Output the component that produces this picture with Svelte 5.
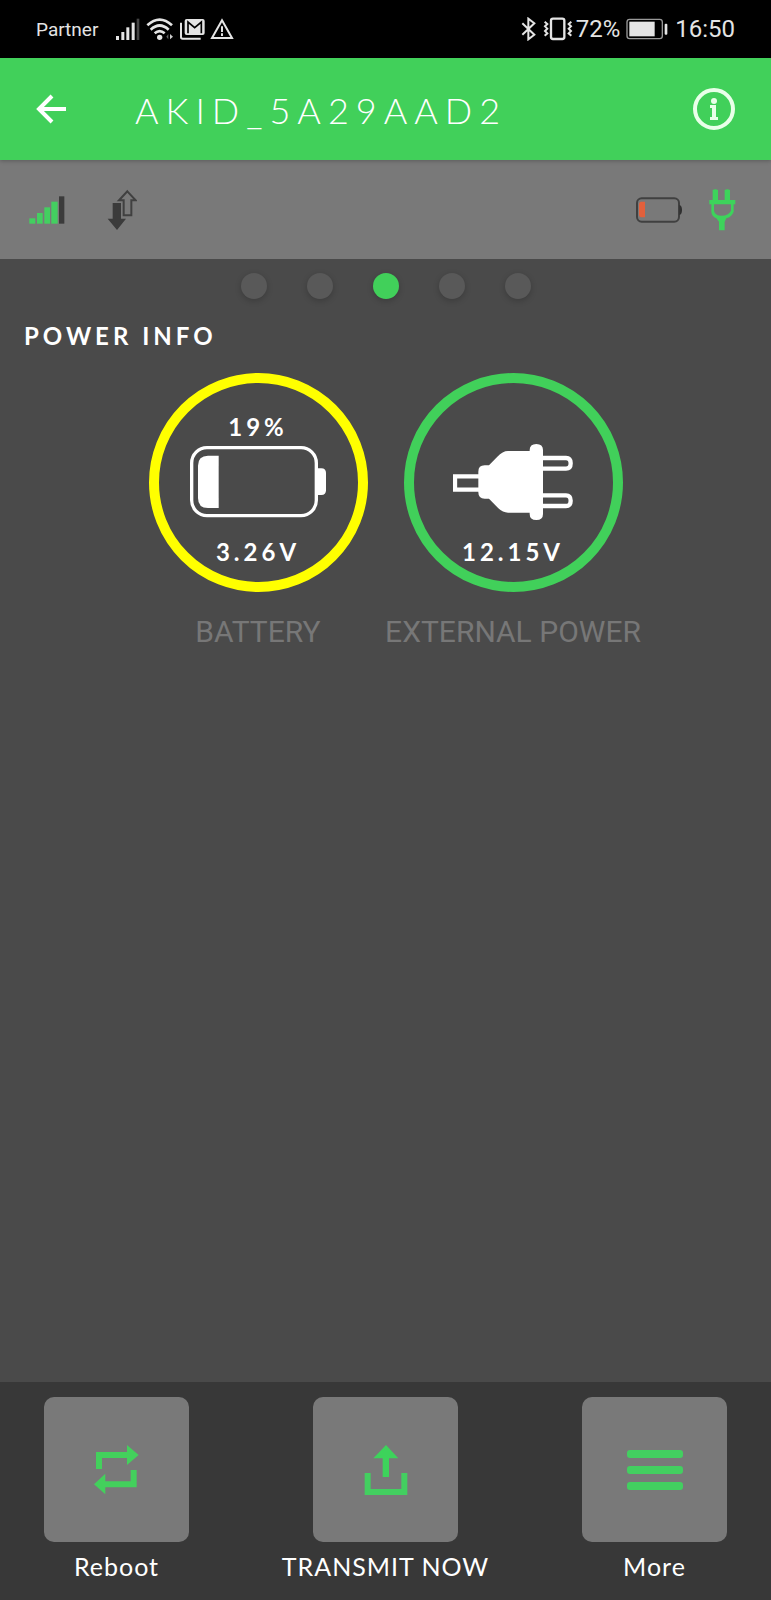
<script lang="ts">
	const device = 'AKID_5A29AAD2';
	const pages = ['Status', 'Network', 'Power info', 'Sensors', 'Location'];

	let page = $state(2);
</script>

<svelte:head>
	<title>Power info</title>
</svelte:head>

<div class="app">
	<div class="system">
		<div class="system-group">
			<span class="carrier">Partner</span>
			<svg class="first" width="24" height="22" viewBox="0 0 72 66" aria-hidden="true">
				<g fill="#e4e4e4">
					<rect x="0" y="54" width="9" height="12" />
					<rect x="16" y="42" width="9" height="24" />
					<rect x="31" y="28" width="9" height="38" />
					<rect x="47" y="14" width="9" height="52" />
				</g>
				<rect x="62" y="2" width="8" height="64" fill="#444" />
			</svg>
			<svg width="28" height="22" viewBox="0 0 84 66" aria-hidden="true">
				<g fill="none" stroke="#e4e4e4" stroke-width="8">
					<path d="M4 22Q41-12 78 22M14 35Q41 10 68 35M26 46Q41 33 56 46" />
				</g>
				<circle cx="41" cy="58" r="8" fill="#e4e4e4" />
				<path d="M61 56l6-8v16z" fill="#666" />
				<path d="M72 48l9 8-9 8z" fill="#ccc" />
			</svg>
			<svg width="25" height="22" viewBox="0 0 75 66" aria-hidden="true">
				<path d="M3 14v43q0 5 5 5h54" fill="none" stroke="#e4e4e4" stroke-width="6" />
				<rect x="14" y="3" width="60" height="48" rx="6" fill="#e4e4e4" />
				<path d="M24 46V12l20 17 20-17v34" fill="none" stroke="#000" stroke-width="5" />
			</svg>
			<svg class="warn" width="24" height="22" viewBox="0 0 72 66" aria-hidden="true">
				<path d="M36 7L66 60H6z" fill="none" stroke="#e4e4e4" stroke-width="6" />
				<path d="M36 25v17M36 46v8" stroke="#e4e4e4" stroke-width="6" />
			</svg>
		</div>
		<div class="system-group">
			<svg width="16" height="24" viewBox="0 0 48 72" aria-hidden="true">
				<path d="M4 19l36 34-18 14V5l18 14L4 53" fill="none" stroke="#e4e4e4" stroke-width="6" />
			</svg>
			<svg class="vibrate" width="30" height="24" viewBox="0 0 90 72" aria-hidden="true">
				<rect x="24" y="5" width="40" height="61" rx="6" fill="none" stroke="#e4e4e4" stroke-width="7" />
				<path
					d="M5 14l8 7-7 7 7 7-7 7 7 7-8 7M85 14l-8 7 7 7-7 7 7 7-7 7 8 7"
					fill="none"
					stroke="#e4e4e4"
					stroke-width="6"
				/>
			</svg>
			<span>72%</span>
			<svg class="charge" width="42" height="22" viewBox="0 0 126 66" aria-hidden="true">
				<rect x="3" y="4" width="106" height="58" rx="8" fill="none" stroke="#999" stroke-width="4" />
				<rect x="10" y="11" width="76" height="44" fill="#e4e4e4" />
				<rect x="116" y="17" width="8" height="33" rx="3" fill="#e4e4e4" />
			</svg>
			<span>16:50</span>
		</div>
	</div>

	<header>
		<button class="icon" aria-label="Back">
			<svg width="30" height="30" viewBox="0 0 30 30">
				<path d="M16 2L3 15l13 13M3 15h27" fill="none" stroke="#fff" stroke-width="4" />
			</svg>
		</button>
		<h1>{device}</h1>
		<button class="icon" aria-label="Info">
			<svg width="44" height="44" viewBox="0 0 44 44">
				<circle cx="23" cy="22" r="19" fill="none" stroke="#e9ffe9" stroke-width="4" />
				<circle cx="23" cy="14" r="3" fill="#e9ffe9" />
				<path d="M19 18h6v12h2v3h-8v-3h2v-9h-2z" fill="#e9ffe9" />
			</svg>
		</button>
	</header>

	<div class="strip">
		<div class="strip-group">
			<svg width="36" height="28" viewBox="0 0 108 84" role="img" aria-label="Signal">
				<g fill="#43cf60">
					<rect x="1" y="67" width="18" height="16" />
					<rect x="24" y="51" width="17" height="32" />
					<rect x="46" y="34" width="17" height="49" />
					<rect x="67" y="17" width="19" height="66" />
				</g>
				<rect x="90" y="1" width="16" height="82" fill="#3b3b3b" />
			</svg>
			<svg width="30" height="42" viewBox="0 0 90 126" role="img" aria-label="Data transfer">
				<path d="M61 7L86 34H73V79H50V34H36z" fill="none" stroke="#404040" stroke-width="6" />
				<path d="M17 42H42V89H57L30 123 2 89H17z" fill="#3b3b3b" />
			</svg>
		</div>
		<div class="strip-group">
			<svg width="46" height="26" viewBox="0 0 138 78" role="img" aria-label="Battery low">
				<rect x="3" y="4" width="126" height="70" rx="14" fill="none" stroke="#404040" stroke-width="6" />
				<path d="M130 24q8 1 8 15t-8 15z" fill="#303030" />
				<path d="M14 14h13v47H14q-5-3-5-8V22q0-6 5-8z" fill="#e2603c" />
			</svg>
			<svg width="27" height="42" viewBox="0 0 81 126" role="img" aria-label="Plugged in">
				<path
					d="M11 3q8-5 16 0V33H47V3q8-5 16 0V33H79V46H74V68Q68 84 52 88L47 98V124H30V98L22 88Q8 82 7 68V46H1V33H11zM15 46V65Q18 80 38 80T66 65V46z"
					fill="#3dd35b"
					fill-rule="evenodd"
				/>
			</svg>
		</div>
	</div>

	<main>
		<nav class="dots" aria-label="Pages">
			{#each pages as name, i (name)}
				<button class:active={page === i} aria-label={name} onclick={() => (page = i)}></button>
			{/each}
		</nav>

		<h2>POWER INFO</h2>

		<div class="gauges">
			<figure>
				<div class="ring low">
					<span class="percent">19%</span>
					<svg width="136" height="76" viewBox="0 -6 408 228" aria-hidden="true">
						<rect x="5" y="5" width="374" height="204" rx="46" fill="none" stroke="#fff" stroke-width="10" />
						<path d="M380 67h14q14 0 14 14v52q0 14-14 14h-14z" fill="#fff" />
						<path d="M86 29V186H54Q24 186 24 156V59Q24 29 54 29z" fill="#fff" />
					</svg>
					<span class="volts">3.26V</span>
				</div>
				<figcaption>BATTERY</figcaption>
			</figure>
			<figure>
				<div class="ring">
					<svg width="120" height="76" viewBox="0 0 360 228" aria-hidden="true">
						<g fill="none" stroke="#fff" stroke-width="13">
							<path d="M80 97H6v40h74" />
							<path d="M268 42h71q14 0 14 16t-14 16h-71M268 154h71q14 0 14 16t-14 16h-71" />
						</g>
						<path
							d="M230 21V18q0-18 20-18t20 18V210q0 18-20 18t-20-18V206H165Q149 206 133 190L108 164H95Q76 164 76 145V83Q76 64 95 64H108L133 38Q149 21 165 21z"
							fill="#fff"
						/>
					</svg>
					<span class="volts">12.15V</span>
				</div>
				<figcaption>EXTERNAL POWER</figcaption>
			</figure>
		</div>
	</main>

	<footer>
		<button class="action">
			<span class="tile">
				<svg width="46" height="50" viewBox="0 0 138 150" aria-hidden="true">
					<path
						d="M6 72V21H99V0L134 30 99 60V39H24V72zM128 75V127H34V148L0 118 34 86V109H110V75z"
						fill="#43d05c"
					/>
				</svg>
			</span>
			<span class="name">Reboot</span>
		</button>
		<button class="action">
			<span class="tile">
				<svg width="44" height="50" viewBox="0 0 132 150" aria-hidden="true">
					<path d="M66 0L103 40H75V96H56V40H28z" fill="#3dd35b" />
					<path d="M11 84V141H121V84" fill="none" stroke="#43cf60" stroke-width="18" />
				</svg>
			</span>
			<span class="name">TRANSMIT NOW</span>
		</button>
		<button class="action">
			<span class="tile">
				<svg width="56" height="42" viewBox="0 0 56 42" aria-hidden="true">
					<g fill="#43cf60">
						<rect y="1" width="56" height="8" rx="3" />
						<rect y="17" width="56" height="8" rx="3" />
						<rect y="33" width="56" height="8" rx="3" />
					</g>
				</svg>
			</span>
			<span class="name">More</span>
		</button>
	</footer>
</div>

<style>
	:global(body) {
		margin: 0;
		background: #4a4a4a;
	}

	.app {
		display: flex;
		flex-direction: column;
		min-height: 100vh;
		color: #fff;
		font-family: Lato, 'Open Sans', sans-serif;
	}

	svg {
		display: block;
		flex: none;
	}

	button {
		padding: 0;
		border: 0;
		background: none;
		color: inherit;
		font: inherit;
		cursor: pointer;
	}

	.system {
		display: flex;
		align-items: center;
		justify-content: space-between;
		height: 58px;
		padding: 0 36px;
		background: #000;
		color: #e4e4e4;
		font: 24px/32px Roboto, sans-serif;
	}

	.system-group {
		display: flex;
		align-items: center;
	}

	.carrier {
		padding-top: 2px;
		font-size: 19px;
	}

	.first {
		margin-left: 18px;
	}

	.system-group svg + svg {
		margin-left: 6px;
	}

	.system-group .warn {
		margin-left: 5px;
	}

	.vibrate {
		margin-right: 3px;
	}

	.charge {
		margin: 0 7px 0 6px;
	}

	header {
		position: relative;
		display: flex;
		align-items: center;
		height: 102px;
		padding: 0 36px;
		background: #41d05a;
		box-shadow: 0 1px 4px rgba(0, 0, 0, 0.25);
	}

	h1 {
		flex: 1;
		margin: 0 0 0 69px;
		padding-top: 2px;
		font-size: 36px;
		font-weight: 300;
		line-height: 48px;
		letter-spacing: 7px;
	}

	.strip {
		display: flex;
		align-items: center;
		justify-content: space-between;
		height: 99px;
		padding: 0 35px 0 29px;
		background: #797979;
	}

	.strip-group {
		display: flex;
		align-items: center;
		gap: 27px;
	}

	.strip-group:first-child {
		gap: 42px;
	}

	main {
		flex: 1;
		background: #4a4a4a;
	}

	.dots {
		display: flex;
		justify-content: center;
		gap: 40px;
		padding-top: 14px;
	}

	.dots button {
		width: 26px;
		height: 26px;
		border-radius: 50%;
		background: #595959;
		box-shadow: 0 2px 6px rgba(0, 0, 0, 0.2);
	}

	.dots button.active {
		background: #41d05a;
	}

	h2 {
		margin: 21px 24px;
		font-size: 24px;
		font-weight: 700;
		line-height: 32px;
		letter-spacing: 4px;
	}

	.gauges {
		display: flex;
		justify-content: center;
	}

	figure {
		display: flex;
		flex-direction: column;
		align-items: center;
		width: 255px;
		margin: 0;
	}

	.ring {
		box-sizing: border-box;
		display: flex;
		flex-direction: column;
		align-items: center;
		justify-content: flex-end;
		width: 219px;
		height: 219px;
		padding-bottom: 14px;
		border: 10px solid #41d05a;
		border-radius: 50%;
		font-size: 24px;
		font-weight: 700;
		line-height: 32px;
		letter-spacing: 4px;
	}

	.ring.low {
		border-color: #ff0;
	}

	.percent {
		margin-bottom: 1px;
	}

	.volts {
		margin-top: 16px;
	}

	figcaption {
		margin-top: 20px;
		color: #777;
		font: 30px/40px Roboto, sans-serif;
		white-space: nowrap;
	}

	footer {
		display: flex;
		justify-content: space-between;
		padding: 15px 44px 18px;
		background: #383838;
	}

	.action {
		display: flex;
		flex-direction: column;
		align-items: center;
		width: 145px;
	}

	.tile {
		display: flex;
		align-items: center;
		justify-content: center;
		width: 145px;
		height: 145px;
		border-radius: 10px;
		background: #797979;
	}

	.name {
		margin-top: 8px;
		font-size: 25px;
		line-height: 32px;
		letter-spacing: 1px;
		white-space: nowrap;
	}
</style>
